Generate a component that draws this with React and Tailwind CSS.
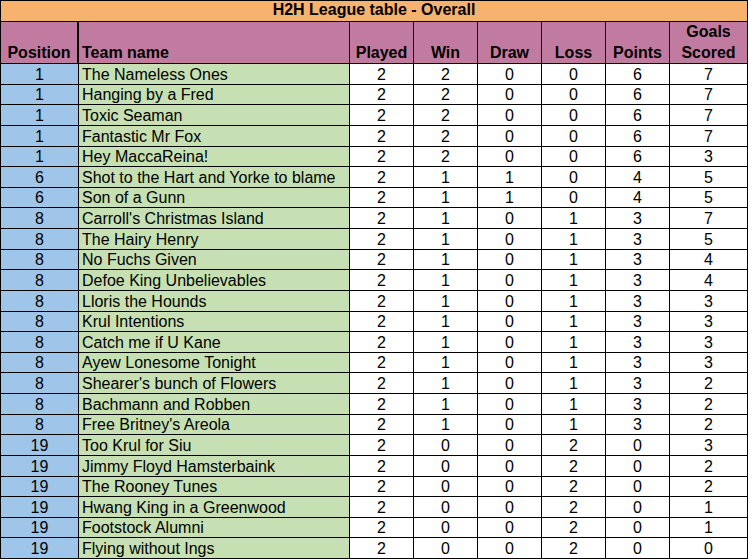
import React from 'react';

const rows = [
    ['1', 'The Nameless Ones', 2, 2, 0, 0, 6, 7],
    ['1', 'Hanging by a Fred', 2, 2, 0, 0, 6, 7],
    ['1', 'Toxic Seaman', 2, 2, 0, 0, 6, 7],
    ['1', 'Fantastic Mr Fox', 2, 2, 0, 0, 6, 7],
    ['1', 'Hey MaccaReina!', 2, 2, 0, 0, 6, 3],
    ['6', 'Shot to the Hart and Yorke to blame', 2, 1, 1, 0, 4, 5],
    ['6', 'Son of a Gunn', 2, 1, 1, 0, 4, 5],
    ['8', "Carroll's Christmas Island", 2, 1, 0, 1, 3, 7],
    ['8', 'The Hairy Henry', 2, 1, 0, 1, 3, 5],
    ['8', 'No Fuchs Given', 2, 1, 0, 1, 3, 4],
    ['8', 'Defoe King Unbelievables', 2, 1, 0, 1, 3, 4],
    ['8', 'Lloris the Hounds', 2, 1, 0, 1, 3, 3],
    ['8', 'Krul Intentions', 2, 1, 0, 1, 3, 3],
    ['8', 'Catch me if U Kane', 2, 1, 0, 1, 3, 3],
    ['8', 'Ayew Lonesome Tonight', 2, 1, 0, 1, 3, 3],
    ['8', "Shearer's bunch of Flowers", 2, 1, 0, 1, 3, 2],
    ['8', 'Bachmann and Robben', 2, 1, 0, 1, 3, 2],
    ['8', "Free Britney's Areola", 2, 1, 0, 1, 3, 2],
    ['19', 'Too Krul for Siu', 2, 0, 0, 2, 0, 3],
    ['19', 'Jimmy Floyd Hamsterbaink', 2, 0, 0, 2, 0, 2],
    ['19', 'The Rooney Tunes', 2, 0, 0, 2, 0, 2],
    ['19', 'Hwang King in a Greenwood', 2, 0, 0, 2, 0, 1],
    ['19', 'Footstock Alumni', 2, 0, 0, 2, 0, 1],
    ['19', 'Flying without Ings', 2, 0, 0, 2, 0, 0],
];

const headers = ['Played', 'Win', 'Draw', 'Loss', 'Points'];

const App = () => {
    return (
        <div className="w-[748px] h-[560px] bg-white font-['Liberation_Sans',Arial,sans-serif] text-black">
            <div className="grid grid-cols-[77px_270px_63px_63px_63px_63px_63px_77px] grid-rows-[20px_41px_repeat(24,minmax(0,1fr))] gap-px bg-black p-px h-[559px]">
                <div className="col-span-8 bg-[#f7b26e] flex items-end justify-center text-[16px] font-bold leading-[20px] pb-px">
                    H2H League table - Overall
                </div>

                <div className="bg-[#c27ba0] flex items-end justify-center text-[16px] font-bold leading-[20px] border-r border-black">
                    Position
                </div>
                <div className="bg-[#c27ba0] flex items-end text-[16px] font-bold leading-[20px] pl-[3px]">
                    Team name
                </div>
                {headers.map((h) => (
                    <div key={h} className="bg-[#c27ba0] flex items-end justify-center text-[16px] font-bold leading-[20px]">
                        {h}
                    </div>
                ))}
                <div className="bg-[#c27ba0] flex items-end justify-center text-center text-[16px] font-bold leading-[21px]">
                    Goals<br />Scored
                </div>

                {rows.map((r, i) => (
                    <React.Fragment key={i}>
                        <div className="bg-[#9fc5e8] flex items-end justify-center text-[16px] leading-[18px]">{r[0]}</div>
                        <div className="bg-[#c6e0b4] flex items-end text-[16px] leading-[18px] pl-[3px] whitespace-nowrap overflow-hidden">{r[1]}</div>
                        {r.slice(2).map((v, j) => (
                            <div key={j} className="bg-white flex items-end justify-center text-[16px] leading-[18px]">{v}</div>
                        ))}
                    </React.Fragment>
                ))}
            </div>
        </div>
    );
};

export default App;
